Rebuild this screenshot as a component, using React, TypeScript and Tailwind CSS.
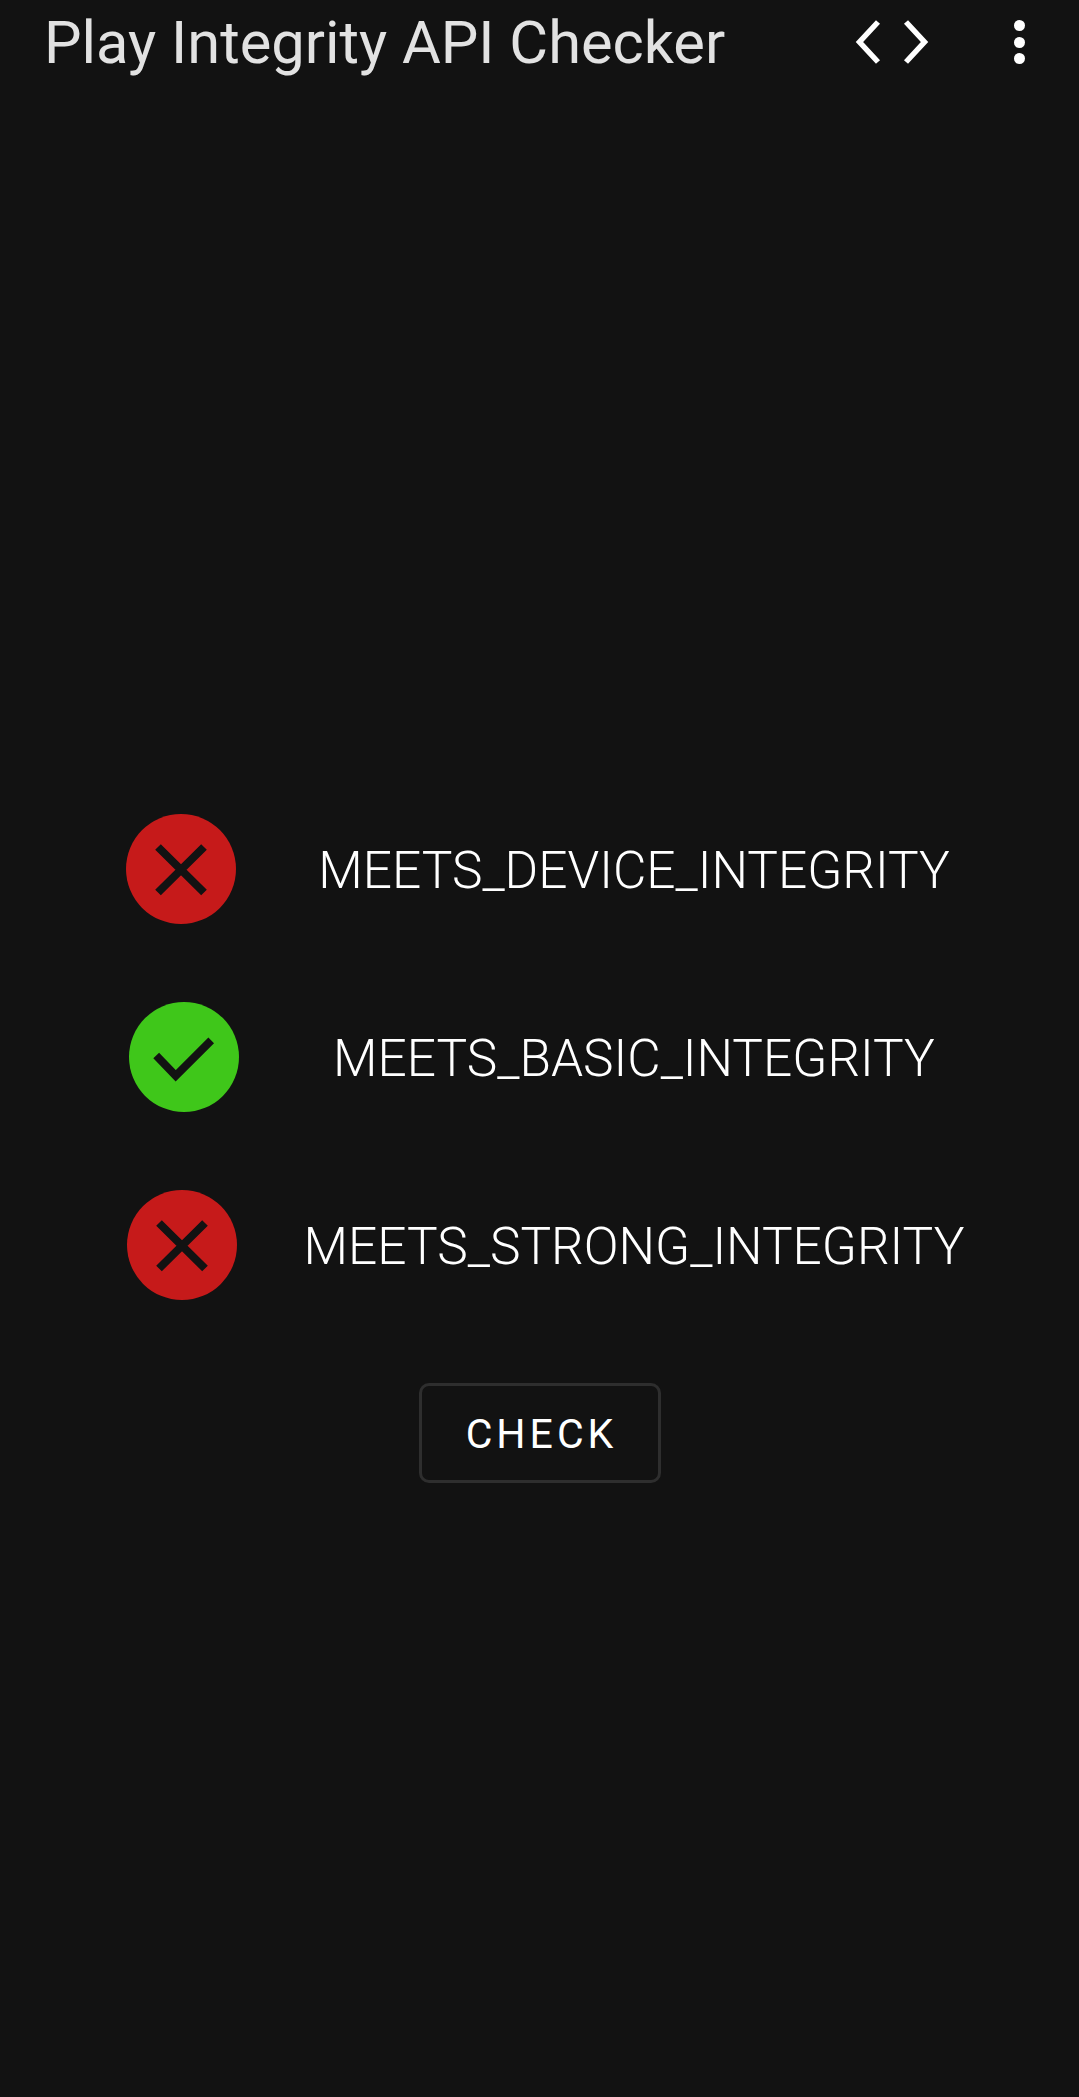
const rows = [
  { label: 'MEETS_DEVICE_INTEGRITY', ok: false, box: 'ml-[126px] pr-[47px]' },
  { label: 'MEETS_BASIC_INTEGRITY', ok: true, box: 'ml-[129px] pr-[50px]' },
  { label: 'MEETS_STRONG_INTEGRITY', ok: false, box: 'ml-[127px] pr-[48px]' },
];

export default function App() {
  return (
    <div className="h-[2097px] w-[1079px] overflow-hidden bg-[#121212] font-['Roboto',sans-serif]">
      {/* Toolbar */}
      <header className="flex h-[84px] items-center pl-[44px]">
        <h1 className="flex-1 pt-[4px] text-[59.6px] leading-none text-[#e2e2e2]">Play Integrity API Checker</h1>
        <svg width="74" height="44" viewBox="0 0 74 44" fill="none" stroke="#fff" strokeWidth="5.5" className="mr-[85px]">
          <path d="M23 2 L4.5 22 L23 42" />
          <path d="M51 2 L69.5 22 L51 42" />
        </svg>
        <div className="mr-[54px] flex flex-col gap-[5.5px]">
          <span className="h-[11px] w-[11px] rounded-full bg-white" />
          <span className="h-[11px] w-[11px] rounded-full bg-white" />
          <span className="h-[11px] w-[11px] rounded-full bg-white" />
        </div>
      </header>

      <main className="mt-[730px] flex flex-col">
        <div className="flex flex-col gap-[78px]">
          {rows.map((row) => (
            <div key={row.label} className={`flex items-center ${row.box}`}>
              <div
                className={`h-[110px] w-[110px] shrink-0 rounded-full ${row.ok ? 'bg-[#3fc71a]' : 'bg-[#c61a1a]'}`}
              >
                <svg width="110" height="110" viewBox="0 0 110 110" fill="none" stroke="#121212" strokeWidth="8">
                  {row.ok ? (
                    <path d="M27.2 53.5 L46.7 73.8 L82.2 38.3" />
                  ) : (
                    <path d="M32 33 L78 78.5 M78 33 L32 78.5" />
                  )}
                </svg>
              </div>
              <span className="flex-1 pt-[3px] text-center text-[51.4px] font-[350] leading-none text-white">
                {row.label}
              </span>
            </div>
          ))}
        </div>

        <button className="mx-auto mt-[83px] h-[100px] w-[242px] rounded-[10px] border-[3px] border-[#2e2e2e] pl-[4px] pt-[3px] text-[41px] font-[450] tracking-[4px] text-white">
          CHECK
        </button>
      </main>
    </div>
  );
}
